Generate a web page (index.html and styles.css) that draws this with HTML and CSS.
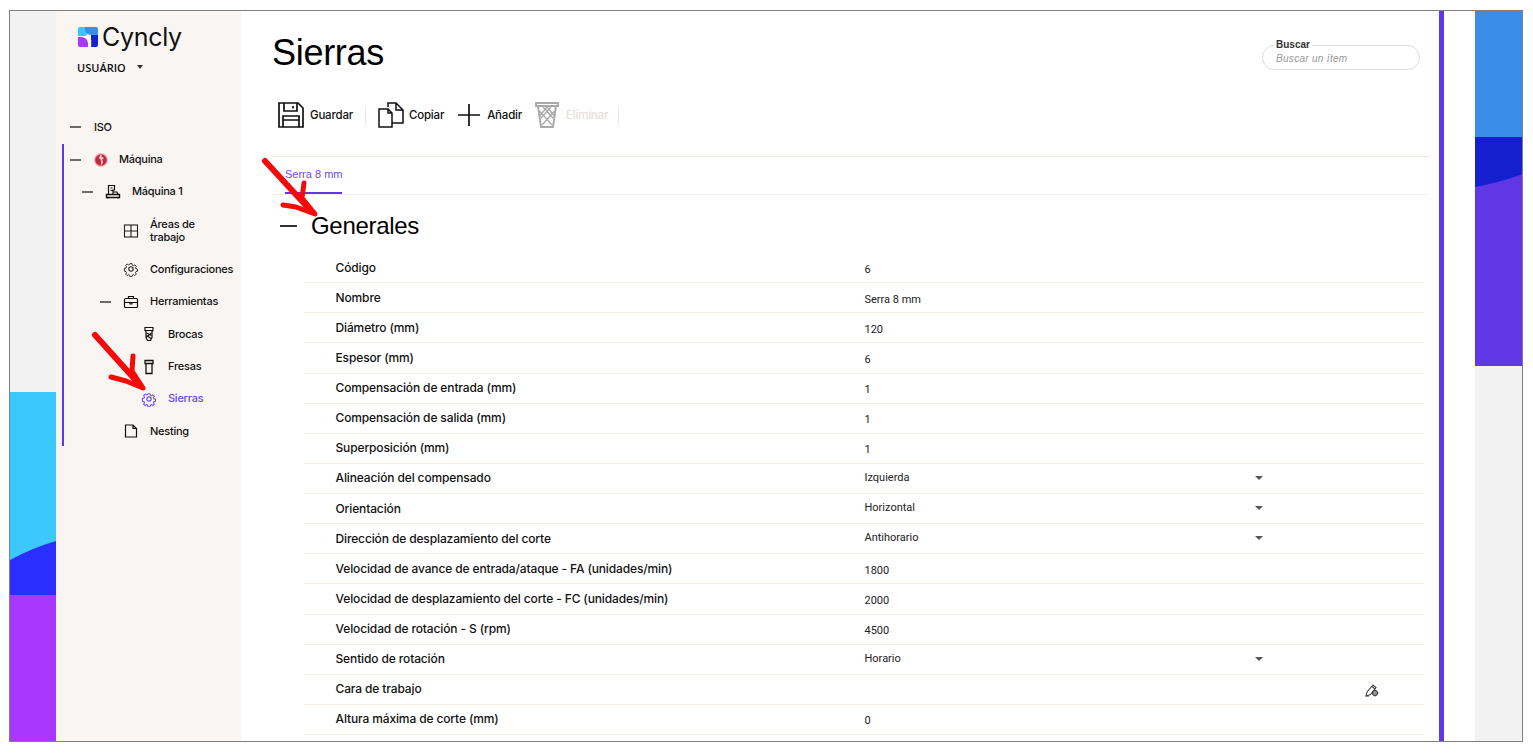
FILE: index.html
```html
<!DOCTYPE html>
<html lang="es">
<head>
<meta charset="utf-8">
<title>Sierras</title>
<link rel="stylesheet" href="styles.css">
</head>
<body>
<div class="frame">
  <div class="strip strip-left">
    <div class="strip-gray"></div>
    <svg class="strip-art" width="46" height="349" viewBox="0 0 46 349" preserveAspectRatio="none">
      <rect width="46" height="349" fill="#3cc8ff"/>
      <path d="M0 168 Q22 156 46 149 V203 H0Z" fill="#2a2eff"/>
      <rect y="203" width="46" height="146" fill="#a938ff"/>
    </svg>
  </div>
  <aside class="sidebar">
    <div class="logo">
      <svg width="20" height="20" viewBox="0 0 20 20">
        <path d="M2 0h7v6a5 5 0 0 1-1 3H0V2a2 2 0 0 1 2-2Z" fill="#39c4fb"/>
        <path d="M7 0h11a2 2 0 0 1 2 2v6H13a6 6 0 0 1-6-6Z" fill="#3a8de8"/>
        <path d="M13 8h7v10a2 2 0 0 1-2 2h-5Z" fill="#1420d0"/>
        <path d="M0 10h4a6 6 0 0 1 6 6v4H2a2 2 0 0 1-2-2Z" fill="#a938ff"/>
        <path d="M13 13h1v7h-1Z" fill="#6038e6"/>
        <path d="M0 9h5a8 8 0 0 1 8 4v7h-3v-4a6 6 0 0 0-6-6H0Z" fill="#fff"/>
      </svg>
      <span class="logo-text">Cyncly</span>
    </div>
    <div class="user"><span>USUÁRIO</span><i class="caret caret-user"></i></div>
    <nav class="tree">
      <div class="tree-line"></div>
      <div class="node l0 no-icon"><i class="dash"></i><span class="lbl">ISO</span></div>
      <div class="node l0"><i class="dash"></i>
        <svg class="ico" viewBox="0 0 16 16"><circle cx="8" cy="8" r="7" fill="#eeb9bf"/><circle cx="8" cy="8" r="5.800" fill="#c42a40"/><path d="M7.500 2.500c1 .3 1.500 1.200 1 2.200L11 6 9.300 7.500l.5 3.500-1.800 2.500V8L6 6Z" fill="#f3cfd2"/></svg>
        <span class="lbl">Máquina</span></div>
      <div class="node l1"><i class="dash"></i>
        <svg class="ico" viewBox="0 0 16 16" fill="none" stroke="#111" stroke-width="1.200"><path d="M3.500 10.500V1.500h6v4.500h-1.500V10.500M5.500 4h2M5.500 6.500h2M8 8h4l1 2.500"/><path d="M1.500 10.500h13v3h-13Z" stroke-width="1.400"/><path d="M3 14.500v-1M13 14.500v-1"/></svg>
        <span class="lbl">Máquina 1</span></div>
      <div class="node l2 tall"><i class="dash hidden"></i>
        <svg class="ico" viewBox="0 0 16 16" fill="none" stroke="#222" stroke-width="1.100"><rect x="1.500" y="2" width="13" height="12"/><path d="M8 2v12M1.500 8h13"/></svg>
        <span class="lbl">Áreas de<br>trabajo</span></div>
      <div class="node l2"><i class="dash hidden"></i>
        <svg class="ico" viewBox="0 0 16 16" fill="none" stroke="#222" stroke-width="1.100"><circle cx="8" cy="8" r="2.200"/><path d="M6.800 1.800h2.400l.4 1.800 1.300.6 1.600-1 1.700 1.700-1 1.600.6 1.300 1.800.4v2.400l-1.800.4-.6 1.300 1 1.600-1.700 1.700-1.600-1-1.300.6-.4 1.800H6.800l-.4-1.800-1.300-.6-1.600 1-1.700-1.700 1-1.600-.6-1.300-1.800-.4V7.300l1.800-.4.6-1.300-1-1.600 1.700-1.700 1.600 1 1.300-.6Z" transform="translate(1.100 1.100) scale(.86)"/></svg>
        <span class="lbl">Configuraciones</span></div>
      <div class="node l2"><i class="dash"></i>
        <svg class="ico" viewBox="0 0 16 16" fill="none" stroke="#111" stroke-width="1.200"><rect x="1.500" y="4.500" width="13" height="9" rx="1"/><path d="M5.500 4.500V2.500h5v2M1.500 8.500h13M7 8.500v1.500h2V8.500"/></svg>
        <span class="lbl">Herramientas</span></div>
      <div class="node l3"><i class="dash hidden"></i>
        <svg class="ico" viewBox="0 0 16 16" fill="none" stroke="#111" stroke-width="1.200"><path d="M4 1.500h8v3l-1 1v6l-1.500 3h-3L5 11.500v-6l-1-1Z"/><path d="M4 4.500h8M5.500 7l5 2.500M5.500 9.500l4.500 3M10.500 7l-5 4"/></svg>
        <span class="lbl">Brocas</span></div>
      <div class="node l3"><i class="dash hidden"></i>
        <svg class="ico" viewBox="0 0 16 16" fill="none" stroke="#111" stroke-width="1.300"><path d="M4 1.500h8v3H4ZM5 4.500h6v10H5Z"/></svg>
        <span class="lbl">Fresas</span></div>
      <div class="node l3 active"><i class="dash hidden"></i>
        <svg class="ico" viewBox="0 0 16 16" fill="none" stroke="#6d4ae8" stroke-width="1.200"><circle cx="8" cy="8" r="2.200"/><path d="M6.800 1.800h2.400l.4 1.800 1.300.6 1.600-1 1.700 1.700-1 1.600.6 1.300 1.800.4v2.400l-1.800.4-.6 1.300 1 1.600-1.700 1.700-1.600-1-1.300.6-.4 1.800H6.800l-.4-1.800-1.300-.6-1.600 1-1.700-1.700 1-1.600-.6-1.300-1.800-.4V7.300l1.800-.4.6-1.300-1-1.600 1.700-1.700 1.600 1 1.300-.6Z" transform="translate(1.100 1.100) scale(.86)"/></svg>
        <span class="lbl">Sierras</span></div>
      <div class="node l2"><i class="dash hidden"></i>
        <svg class="ico" viewBox="0 0 16 16" fill="none" stroke="#111" stroke-width="1.200"><path d="M2.500 2h7.500l3.500 3.500V14h-11ZM10 2v3.500h3.500"/></svg>
        <span class="lbl">Nesting</span></div>
    </nav>
  </aside>
  <main class="main">
    <header class="head">
      <h1>Sierras</h1>
      <div class="search">
        <span class="search-label">Buscar</span>
        <span class="search-ph">Buscar un ítem</span>
      </div>
    </header>
    <div class="toolbar">
      <button class="tool t-save">
        <svg width="26" height="26" viewBox="0 0 26 26" fill="none" stroke="#111" stroke-width="1.700"><path d="M1 1h19l5 5v19H1Z"/><path d="M6 1v8h13V1M15 4v2.500"/><path d="M5 25V14h16v11M5 18h16"/></svg>
        <span>Guardar</span></button>
      <i class="sep s1"></i>
      <button class="tool t-copy">
        <svg width="26" height="26" viewBox="0 0 26 26" fill="none" stroke="#111" stroke-width="1.500"><path d="M1 7h9l4 4v14H1ZM10 7v4h4"/><path d="M10 5V1h8l7 7v13H14M18 1v7h7"/></svg>
        <span>Copiar</span></button>
      <button class="tool t-add">
        <svg width="24" height="24" viewBox="0 0 24 24" stroke="#111" stroke-width="1.700"><path d="M12 1v22M1 12h22"/></svg>
        <span>Añadir</span></button>
      <button class="tool t-del">
        <svg width="24" height="26" viewBox="0 0 24 26" fill="none" stroke="#a9a9a9" stroke-width="1.900"><path d="M1 1h22v3H1ZM3 4l3 21h12l3-21"/><path d="M4.500 9 17 23M19.500 9 7 23M12 5l7.500 9M12 5l-7.500 9M8 5l10 11M16 5 6 16" stroke-width="1.300"/></svg>
        <span>Eliminar</span></button>
      <i class="sep s2"></i>
    </div>
    <div class="tabs"><span class="tab">Serra 8 mm</span></div>
    <section class="section-head"><i class="sec-dash"></i><h2>Generales</h2></section>
    <div class="table">
      <div class="row"><span class="k">Código</span><span class="v">6</span></div>
      <div class="row"><span class="k">Nombre</span><span class="v">Serra 8 mm</span></div>
      <div class="row"><span class="k">Diámetro (mm)</span><span class="v">120</span></div>
      <div class="row"><span class="k">Espesor (mm)</span><span class="v">6</span></div>
      <div class="row"><span class="k">Compensación de entrada (mm)</span><span class="v">1</span></div>
      <div class="row"><span class="k">Compensación de salida (mm)</span><span class="v">1</span></div>
      <div class="row"><span class="k">Superposición (mm)</span><span class="v">1</span></div>
      <div class="row"><span class="k">Alineación del compensado</span><span class="v up">Izquierda</span><i class="caret caret-row"></i></div>
      <div class="row"><span class="k">Orientación</span><span class="v up">Horizontal</span><i class="caret caret-row"></i></div>
      <div class="row"><span class="k">Dirección de desplazamiento del corte</span><span class="v up">Antihorario</span><i class="caret caret-row"></i></div>
      <div class="row"><span class="k">Velocidad de avance de entrada/ataque - FA (unidades/min)</span><span class="v">1800</span></div>
      <div class="row"><span class="k">Velocidad de desplazamiento del corte - FC (unidades/min)</span><span class="v">2000</span></div>
      <div class="row"><span class="k">Velocidad de rotación - S (rpm)</span><span class="v">4500</span></div>
      <div class="row"><span class="k">Sentido de rotación</span><span class="v up">Horario</span><i class="caret caret-row"></i></div>
      <div class="row"><span class="k">Cara de trabajo</span><span class="v"></span>
        <svg class="pencil" width="14" height="14" viewBox="0 0 14 14" fill="none" stroke="#444" stroke-width="1.100"><path d="M1 13l1-4 6-7 3 2.500-5.500 7Z"/><path d="M7 3.500l3 2.500M1 13h3"/><circle cx="10" cy="10" r="2.500" fill="#999"/><path d="M10 6.500v1.500M10 12v1.500M6.500 10H8M12 10h1.500"/></svg>
      </div>
      <div class="row"><span class="k">Altura máxima de corte (mm)</span><span class="v">0</span></div>
    </div>
  </main>
  <div class="purple-bar"></div>
  <div class="gap"></div>
  <div class="strip strip-right">
    <svg class="strip-art" width="48" height="355" viewBox="0 0 48 355" preserveAspectRatio="none">
      <rect width="48" height="126" fill="#3a8de8"/>
      <rect y="126" width="48" height="229" fill="#6038e6"/>
      <path d="M0 126H48V163Q24 172 0 176Z" fill="#1420d0"/>
    </svg>
    <div class="strip-gray"></div>
  </div>
  <svg class="arrows" width="1513" height="731" viewBox="10 10 1513 731" fill="none" stroke="#f50a0a" stroke-linecap="round" stroke-linejoin="round">
    <path d="M265 160 L312 211" stroke-width="6"/>
    <path d="M304 182 L302 197 L315 213 L296 206 L283 204" stroke-width="5"/>
    <path d="M95 334 L140 384" stroke-width="6"/>
    <path d="M133 355 L132 370 L143 387 L126 380 L111 376" stroke-width="5"/>
  </svg>
</div>
</body>
</html>
```
FILE: styles.css
```css
* { box-sizing: border-box; }
html, body { margin: 0; padding: 0; background: #fff; height: 100%; overflow: hidden; }
body { padding: 10px 10px 0 9px; font-family: "Inter", "Liberation Sans", sans-serif; color: #111; }

.frame {
  position: relative;
  display: flex;
  width: 1514px;
  height: 732px;
  border: 1px solid #808080;
  overflow: hidden;
  background: #fff;
}

.strip { width: 46px; flex: none; display: flex; flex-direction: column; background: #f2f2f2; }
.strip-gray { flex: 1; background: #f2f2f2; }
.strip-art { display: block; flex: none; }
.strip-right { width: 48px; }

.sidebar { width: 185px; flex: none; background: #f8f5f2; padding: 15px 0 0 22px; }
.logo { display: flex; align-items: center; gap: 4px; height: 22px; }
.logo svg { flex: none; }
.logo-text { font-family: "Inter", sans-serif; font-size: 25px; letter-spacing: -.3px; line-height: 22px; color: #111; }
.user { display: flex; align-items: center; margin-top: 12px; margin-left: -1px; font-family: "Open Sans", sans-serif; font-weight: 600; font-size: 11px; line-height: 16px; }
.caret { display: block; width: 0; height: 0; border-left: 4px solid transparent; border-right: 4px solid transparent; border-top: 4px solid #555; }
.caret-user { margin-left: 11px; margin-top: -3px; border-left-width: 3.500px; border-right-width: 3.500px; border-top-color: #333; }

.tree { position: relative; margin: 35px 0 0 -22px; }
.tree-line { position: absolute; left: 6px; top: 33px; width: 2px; height: 302px; background: #6038e6; }
.node { display: flex; align-items: center; height: 32.400px; font-size: 11px; font-weight: 500; letter-spacing: -.25px; line-height: 13px; }
.node.tall { height: 45px; }
.node.l0 { padding-left: 14px; }
.node.l1 { padding-left: 26px; }
.node.l2 { padding-left: 44px; }
.node.l3 { padding-left: 62px; }
.dash { display: block; width: 11px; height: 2px; background: #6a6a6a; flex: none; }
.dash.hidden { visibility: hidden; }
.ico { width: 16px; height: 16px; margin-left: 12px; margin-right: 10px; flex: none; }
.l1 .ico, .l2 .ico, .l3 .ico { margin-right: 11px; }
.no-icon .lbl { margin-left: 13px; }
.active .lbl { color: #6d4ae8; }

.main { flex: none; width: 1198px; display: flex; flex-direction: column; padding: 0 0 0 31px; }
.head { display: flex; justify-content: space-between; align-items: flex-start; height: 88px; }
h1 { margin: 21px 0 0; font-family: "Liberation Sans", sans-serif; font-weight: 400; font-size: 36px; line-height: 42px; letter-spacing: -.3px; color: #000; }
.search { position: relative; margin: 34px 19px 0 0; width: 158px; height: 25px; border: 1px solid #ddd; border-radius: 13px; }
.search-label { position: absolute; left: 11px; top: -7px; padding: 0 2px; background: #fff; font-family: "Liberation Sans", sans-serif; font-weight: 700; font-size: 10px; line-height: 12px; color: #333; }
.search-ph { position: absolute; left: 13px; top: 7px; font-family: "Liberation Sans", sans-serif; font-style: italic; font-size: 10px; line-height: 12px; color: #999; letter-spacing: .3px; }

.toolbar { display: flex; align-items: center; height: 58px; padding: 0 0 25px 6px; border-bottom: 1px solid #f0e8e2; margin-right: 10px; }
.tool { display: flex; align-items: center; gap: 6px; padding: 0; border: 0; background: none; font: 500 11.500px "Inter", sans-serif; letter-spacing: -.2px; color: #111; }
.t-copy { margin-left: 12px; gap: 5px; }
.t-add { margin-left: 13px; }
.t-del { color: #e8e0da; margin-left: 13px; gap: 7px; }
.sep { display: block; width: 1px; height: 19px; background: #f0e8e2; }
.s1 { margin-left: 12px; }
.s2 { margin-left: 10px; }

.tabs { height: 38px; border-bottom: 1px solid #eee; margin-right: 10px; padding-left: 13px; }
.tab { display: inline-block; height: 37px; padding-top: 11px; font: 500 11px/13px "Liberation Sans", sans-serif; color: #6d4ae8; border-bottom: 2px solid #6038e6; width: 57px; white-space: nowrap; }

.section-head { display: flex; align-items: center; height: 58px; padding: 4px 0 0 8px; flex: none; }
.sec-dash { display: block; width: 17px; height: 2px; background: #333; margin-right: 14px; }
h2 { margin: 0; font-family: "Liberation Sans", sans-serif; font-weight: 400; font-size: 24px; line-height: 28px; letter-spacing: -.3px; color: #000; }

.table { margin: 0 15px 0 32px; flex: none; }
.row { display: flex; align-items: center; height: 30.130px; border-bottom: 1px solid #f3ece7; position: relative; padding-left: 31.500px; }
.k { width: 529px; flex: none; font-size: 12px; font-weight: 500; letter-spacing: -.13px; margin-top: -1px; }
.v { font-family: "Roboto", sans-serif; font-size: 11px; color: #222; margin-top: 3px; }
.v.up { margin-top: -2px; }
.caret-row { position: absolute; left: 951px; top: 12px; }
.pencil { position: absolute; left: 1061px; top: 8px; }

.purple-bar { width: 5px; flex: none; background: #6038e6; }
.gap { width: 31px; flex: none; background: #fff; }

.arrows { position: absolute; left: 0; top: 0; pointer-events: none; }
```
